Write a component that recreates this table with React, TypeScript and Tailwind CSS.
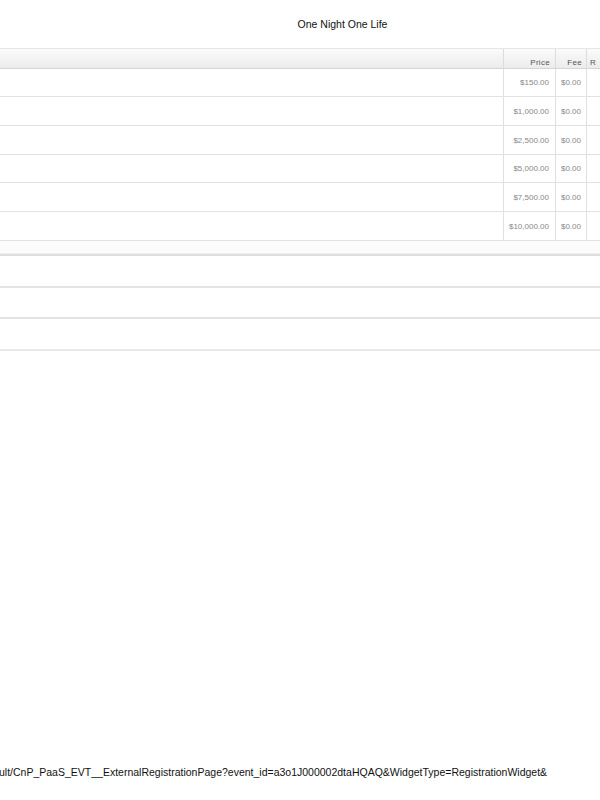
import React from "react";

const prices = ["$150.00", "$1,000.00", "$2,500.00", "$5,000.00", "$7,500.00", "$10,000.00"];
const rowHeights = ["h-[28px]", "h-[29px]", "h-[29px]", "h-[28px]", "h-[29px]", "h-[29px]"];

const App: React.FC = () => {
  return (
    <div className="w-[600px] h-[800px] bg-white overflow-hidden flex flex-col font-['Liberation_Sans',Arial,sans-serif] text-black">
      {/* title */}
      <div className="h-[48px] flex items-center justify-center pl-[85px] pt-[2px] text-[10.5px] text-[#111]">
        One Night One Life
      </div>

      {/* ticket table */}
      <div className="flex flex-col">
        <div className="flex h-[21px] border-t border-[#e6e6e6] border-b border-b-[#d6d6d6] bg-gradient-to-b from-[#fbfbfb] to-[#ececec] text-[8px] text-[#555] tracking-[0.3px]">
          <div className="w-[504px] border-r border-[#dcdcdc]" />
          <div className="w-[52px] border-r border-[#dcdcdc] flex items-center justify-end pr-[5px] pt-[8px]">Price</div>
          <div className="w-[31px] border-r border-[#dcdcdc] flex items-center justify-end pr-[4px] pt-[8px]">Fee</div>
          <div className="flex-1 flex items-center pl-[3px] pt-[8px]">R</div>
        </div>
        {prices.map((p, i) => (
          <div key={p} className={`flex ${rowHeights[i]} border-b border-[#e2e2e2] text-[8px] text-[#888]`}>
            <div className="w-[504px] border-r border-[#e0e0e0]" />
            <div className="w-[52px] border-r border-[#e0e0e0] flex items-center justify-end pr-[6px] pt-[1px]">{p}</div>
            <div className="w-[31px] border-r border-[#e0e0e0] flex items-center justify-end pr-[5px] pt-[1px]">$0.00</div>
            <div className="flex-1" />
          </div>
        ))}
      </div>

      {/* lower rows */}
      <div className="h-[13px] bg-[#fcfcfc] border-b border-[#f0f0f0]" />
      <div className="h-[2px] bg-[#dedede]" />
      <div className="h-[32px] border-b-2 border-[#e4e4e4]" />
      <div className="h-[31px] border-b-2 border-[#e4e4e4]" />
      <div className="h-[32px] border-b-2 border-[#e8e8e8]" />

      <div className="flex-1" />

      {/* url footer */}
      <div className="h-[35px] whitespace-nowrap text-[10.5px] text-[#111] -ml-[1px]">
        ult/CnP_PaaS_EVT__ExternalRegistrationPage?event_id=a3o1J000002dtaHQAQ&amp;WidgetType=RegistrationWidget&amp;
      </div>
    </div>
  );
};

export default App;
